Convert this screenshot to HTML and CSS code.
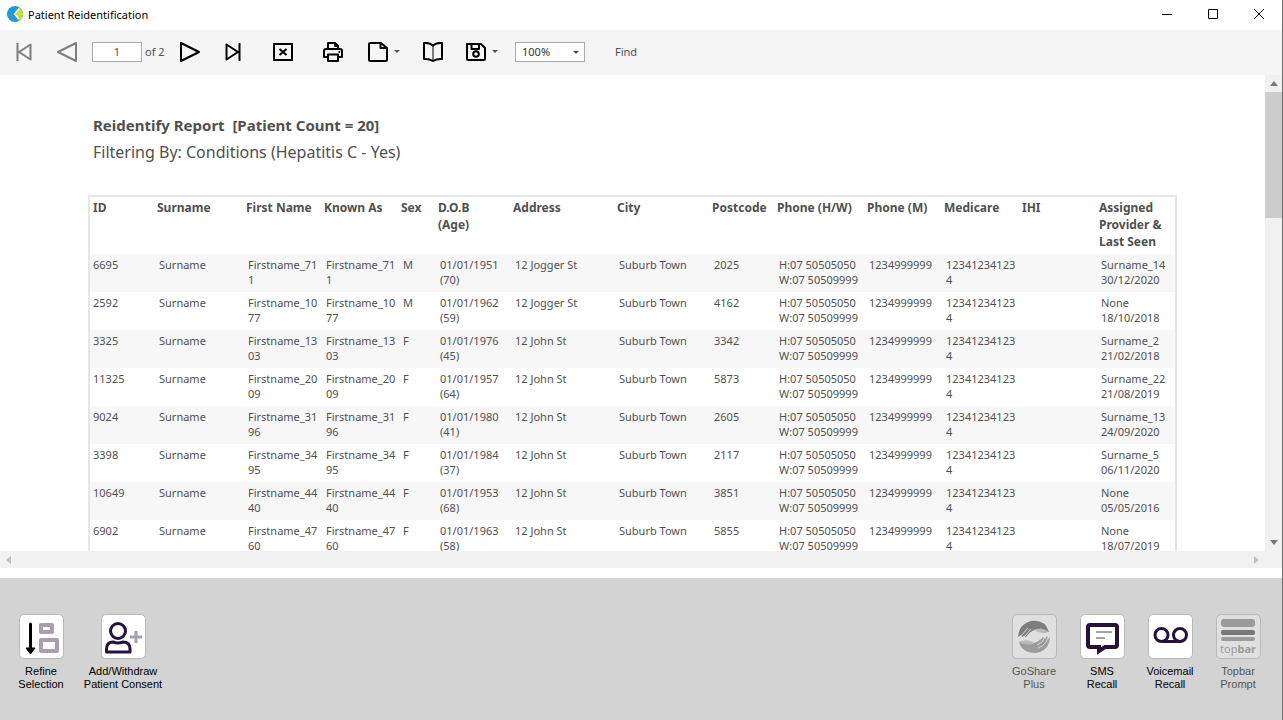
FILE: index.html
```html
<!DOCTYPE html>
<html lang="en">
<head>
    <meta charset="UTF-8">
    <meta name="viewport" content="width=device-width, initial-scale=1.0">
    <title>Patient Reidentification</title>
    <link rel="stylesheet" href="styles.css">
</head>
<body>
    <!-- TITLE BAR -->
    <header class="titlebar">
        <svg class="logo" width="16" height="16" viewBox="0 0 16 16">
            <circle cx="8" cy="8" r="8" fill="#1b9dd9"/>
            <path d="M7 8L12 1A8 8 0 0 1 12 15Z" fill="#cddc39"/>
            <path d="M6.500 8L11.500 2.500L12.500 3.500L8.500 8L12.500 12.500L11.500 13.500Z" fill="#fff"/>
        </svg>
        <h1>Patient Reidentification</h1>
        <div class="window-buttons">
            <button type="button" aria-label="Minimize"><svg width="10" height="10" viewBox="0 0 10 10"><path d="M0 5.5H10"/></svg></button>
            <button type="button" aria-label="Maximize"><svg width="10" height="10" viewBox="0 0 10 10"><path d="M.5 .5H9.5V9.5H.5Z"/></svg></button>
            <button type="button" aria-label="Close"><svg width="10" height="10" viewBox="0 0 10 10"><path d="M0 0L10 10M10 0L0 10"/></svg></button>
        </div>
    </header>

    <!-- TOOLBAR -->
    <div class="toolbar">
        <button type="button" class="tool off close-gap" aria-label="First page"><svg width="20" height="20" viewBox="0 0 20 20"><path d="M3.5 1V19M16.5 2.5V17.5L5 10Z"/></svg></button>
        <button type="button" class="tool off prev" aria-label="Previous page"><svg width="20" height="20" viewBox="0 0 20 20"><path d="M19 1V19L1 10Z"/></svg></button>
        <input class="page" type="text" value="1" aria-label="Page">
        <span class="total">of 2</span>
        <button type="button" class="tool close-gap" aria-label="Next page"><svg width="20" height="20" viewBox="0 0 20 20"><path d="M1 1V19L19 10Z"/></svg></button>
        <button type="button" class="tool" aria-label="Last page"><svg width="20" height="20" viewBox="0 0 20 20"><path d="M16.5 1V19M3.5 2.5V17.5L15 10Z"/></svg></button>
        <button type="button" class="tool" aria-label="Cancel"><svg width="20" height="20" viewBox="0 0 20 20"><path d="M1 2H19V18H1ZM6.5 7L13.5 13M13.5 7L6.5 13"/></svg></button>
        <button type="button" class="tool print" aria-label="Print"><svg width="20" height="20" viewBox="0 0 20 20"><path d="M5 7V1H12L15 4V7M5 15H1V9Q1 7 3 7H17Q19 7 19 9V15H15M5 12.5H15V19H5ZM12 1V4H15"/><path d="M15.5 10H17"/></svg></button>
        <button type="button" class="tool close-gap" aria-label="Page setup"><svg width="20" height="20" viewBox="0 0 20 20"><path d="M1 2Q1 1 2 1H13L19 6V18Q19 19 18 19H2Q1 19 1 18ZM12.5 1V6H19"/></svg><i class="caret"></i></button>
        <button type="button" class="tool close-gap" aria-label="Layout"><svg width="20" height="20" viewBox="0 0 20 20"><path d="M10 3.5Q6 .5 1 1V17Q6 16.5 10 19Q14 16.5 19 17V1Q14 .5 10 3.5Z"/><path class="thin" d="M10 3.5V19"/></svg></button>
        <button type="button" class="tool export" aria-label="Export"><svg width="20" height="20" viewBox="0 0 20 20"><path d="M1 2H15L19 6V17Q19 18 18 18H2Q1 18 1 17ZM5.500 2V7H13V2"/><circle cx="10" cy="12" r="2.800"/></svg><i class="caret"></i></button>
        <div class="zoom">
            <select aria-label="Zoom">
                <option>100%</option>
                <option>150%</option>
                <option>200%</option>
            </select>
            <i class="caret"></i>
        </div>
        <button type="button" class="find">Find</button>
    </div>

    <!-- REPORT -->
    <main class="viewer">
        <div class="report">
            <h2>Reidentify Report&nbsp; [Patient Count = 20]</h2>
            <p>Filtering By: Conditions (Hepatitis C - Yes)</p>
            <table>
                <colgroup>
                    <col class="w-id"><col class="w-surname"><col class="w-name"><col class="w-mid"><col class="w-sex"><col class="w-dob"><col class="w-address"><col class="w-city"><col class="w-postcode"><col class="w-phone"><col class="w-mid"><col class="w-name"><col class="w-mid"><col class="w-provider">
                </colgroup>
                <thead>
                    <tr><th>ID</th><th>Surname</th><th>First Name</th><th>Known As</th><th>Sex</th><th>D.O.B<br>(Age)</th><th>Address</th><th>City</th><th>Postcode</th><th>Phone (H/W)</th><th>Phone (M)</th><th>Medicare</th><th>IHI</th><th>Assigned<br>Provider &amp;<br>Last Seen</th></tr>
                </thead>
                <tbody>
                    <tr><td>6695</td><td>Surname</td><td>Firstname_71<br>1</td><td>Firstname_71<br>1</td><td>M</td><td>01/01/1951<br>(70)</td><td>12 Jogger St</td><td>Suburb Town</td><td>2025</td><td>H:07 50505050<br>W:07 50509999</td><td>1234999999</td><td>12341234123<br>4</td><td></td><td>Surname_14<br>30/12/2020</td></tr>
                    <tr><td>2592</td><td>Surname</td><td>Firstname_10<br>77</td><td>Firstname_10<br>77</td><td>M</td><td>01/01/1962<br>(59)</td><td>12 Jogger St</td><td>Suburb Town</td><td>4162</td><td>H:07 50505050<br>W:07 50509999</td><td>1234999999</td><td>12341234123<br>4</td><td></td><td>None<br>18/10/2018</td></tr>
                    <tr><td>3325</td><td>Surname</td><td>Firstname_13<br>03</td><td>Firstname_13<br>03</td><td>F</td><td>01/01/1976<br>(45)</td><td>12 John St</td><td>Suburb Town</td><td>3342</td><td>H:07 50505050<br>W:07 50509999</td><td>1234999999</td><td>12341234123<br>4</td><td></td><td>Surname_2<br>21/02/2018</td></tr>
                    <tr><td>11325</td><td>Surname</td><td>Firstname_20<br>09</td><td>Firstname_20<br>09</td><td>F</td><td>01/01/1957<br>(64)</td><td>12 John St</td><td>Suburb Town</td><td>5873</td><td>H:07 50505050<br>W:07 50509999</td><td>1234999999</td><td>12341234123<br>4</td><td></td><td>Surname_22<br>21/08/2019</td></tr>
                    <tr><td>9024</td><td>Surname</td><td>Firstname_31<br>96</td><td>Firstname_31<br>96</td><td>F</td><td>01/01/1980<br>(41)</td><td>12 John St</td><td>Suburb Town</td><td>2605</td><td>H:07 50505050<br>W:07 50509999</td><td>1234999999</td><td>12341234123<br>4</td><td></td><td>Surname_13<br>24/09/2020</td></tr>
                    <tr><td>3398</td><td>Surname</td><td>Firstname_34<br>95</td><td>Firstname_34<br>95</td><td>F</td><td>01/01/1984<br>(37)</td><td>12 John St</td><td>Suburb Town</td><td>2117</td><td>H:07 50505050<br>W:07 50509999</td><td>1234999999</td><td>12341234123<br>4</td><td></td><td>Surname_5<br>06/11/2020</td></tr>
                    <tr><td>10649</td><td>Surname</td><td>Firstname_44<br>40</td><td>Firstname_44<br>40</td><td>F</td><td>01/01/1953<br>(68)</td><td>12 John St</td><td>Suburb Town</td><td>3851</td><td>H:07 50505050<br>W:07 50509999</td><td>1234999999</td><td>12341234123<br>4</td><td></td><td>None<br>05/05/2016</td></tr>
                    <tr><td>6902</td><td>Surname</td><td>Firstname_47<br>60</td><td>Firstname_47<br>60</td><td>F</td><td>01/01/1963<br>(58)</td><td>12 John St</td><td>Suburb Town</td><td>5855</td><td>H:07 50505050<br>W:07 50509999</td><td>1234999999</td><td>12341234123<br>4</td><td></td><td>None<br>18/07/2019</td></tr>
                </tbody>
            </table>
        </div>
        <div class="vscroll">
            <button type="button" aria-label="Scroll up"><i class="arrow up"></i></button>
            <div class="thumb"></div>
            <button type="button" aria-label="Scroll down"><i class="arrow down"></i></button>
        </div>
        <div class="hscroll">
            <button type="button" aria-label="Scroll left"><i class="arrow left"></i></button>
            <button type="button" aria-label="Scroll right"><i class="arrow right"></i></button>
        </div>
    </main>

    <!-- ACTIONS -->
    <footer class="actions">
        <button type="button" class="action">
            <span class="tile"><svg width="42" height="42" viewBox="0 0 42 42">
                <path d="M10.500 9V36" stroke="#000" stroke-width="3" stroke-linecap="round"/>
                <path d="M6 33H15L10.500 39Z" fill="#000" stroke="#000" stroke-linejoin="round"/>
                <path d="M21 10H32V17H21ZM21 25H37V36H21Z" fill="none" stroke="#a79fb0" stroke-width="4" stroke-linejoin="round"/>
            </svg></span>
            <span>Refine<br>Selection</span>
        </button>
        <button type="button" class="action">
            <span class="tile"><svg width="42" height="42" viewBox="0 0 42 42" fill="none" stroke="#25123a" stroke-width="3">
                <circle cx="16" cy="16" r="7.500"/>
                <path d="M4.500 37V34Q4.500 27 11 27Q16 29 21 27Q28 27 28 34V37Z" stroke-linejoin="round"/>
                <path d="M28 22H40M34 16V28" stroke="#a79fb0"/>
            </svg></span>
            <span>Add/Withdraw<br>Patient Consent</span>
        </button>
        <div class="spacer"></div>
        <button type="button" class="action" disabled>
            <span class="tile"><svg width="42" height="42" viewBox="0 0 42 42">
                <path d="M5 22Q6 9 18 6Q32 4 36 17Q29 17 24 14Q17 16 13 22L11 21L9 22L8 20Z" fill="#7e7e7e"/>
                <path d="M21 15Q28 11 36 17Q29 20 21 15Z" fill="#b8b8b8"/>
                <path d="M8 21L15 13M11 22L18 14" stroke="#d8d8d8"/>
                <path d="M37 22Q36 36 23 38Q9 38 6 27Q13 26 18 29Q26 27 30 22L32 24L34 21L35 24Z" fill="#9b9b9b"/>
                <path d="M6 27Q13 23 22 28Q15 32 6 27Z" fill="#b8b8b8"/>
                <path d="M35 23Q32 31 25 33M32 22Q30 28 24 30" fill="none" stroke="#d8d8d8"/>
            </svg></span>
            <span>GoShare<br>Plus</span>
        </button>
        <button type="button" class="action">
            <span class="tile"><svg width="42" height="42" viewBox="0 0 42 42" fill="none">
                <path d="M9 10H34Q36 10 36 12V30Q36 32 34 32H24L18 36V32H9Q7 32 7 30V12Q7 10 9 10Z" stroke="#25123a" stroke-width="4"/>
                <path d="M15 17H31M15 23H24" stroke="#a79fb0" stroke-width="2"/>
            </svg></span>
            <span>SMS<br>Recall</span>
        </button>
        <button type="button" class="action">
            <span class="tile"><svg width="42" height="42" viewBox="0 0 42 42" fill="none" stroke="#25123a" stroke-width="3">
                <circle cx="12.500" cy="20" r="6.500"/><circle cx="31" cy="20" r="6.500"/><path d="M12 26.500H31"/>
            </svg></span>
            <span>Voicemail<br>Recall</span>
        </button>
        <button type="button" class="action" disabled>
            <span class="tile topbar"><svg width="36" height="24" viewBox="0 0 36 24">
                <rect x="1" y="0" width="34" height="8" rx="3" fill="#9b9b9b"/>
                <rect x="1" y="11" width="34" height="5" rx="2" fill="#777"/>
                <rect x="1" y="18" width="34" height="4" rx="2" fill="#9b9b9b"/>
            </svg><span class="brand">top<b>bar</b></span></span>
            <span>Topbar<br>Prompt</span>
        </button>
    </footer>
</body>
</html>
```
FILE: styles.css
```css
* {
    box-sizing: border-box;
}

body {
    display: flex;
    flex-direction: column;
    height: 100vh;
    margin: 0;
    border-right: 1px solid #6e6e6e;
    background-color: #fff;
    color: #505050;
    font-family: "Noto Sans", "Open Sans", sans-serif;
    font-size: 11px;
    overflow: hidden;
}

button {
    padding: 0;
    border: none;
    background: none;
    color: inherit;
    font: inherit;
    cursor: pointer;
}

svg {
    display: block;
}

/* title bar */
.titlebar {
    display: flex;
    align-items: center;
    height: 30px;
    padding: 0 0 2px 7px;
    color: #000;
}

.titlebar h1 {
    flex: 1;
    margin: 0 0 0 5px;
    font-size: 11px;
    font-weight: normal;
}

.window-buttons {
    display: flex;
}

.window-buttons button {
    display: flex;
    align-items: center;
    justify-content: center;
    width: 46px;
    height: 28px;
}

.window-buttons svg {
    fill: none;
    stroke: #000;
}

/* toolbar */
.toolbar {
    display: flex;
    align-items: center;
    height: 45px;
    padding: 0 0 2px 14px;
    background-color: #f5f5f5;
}

.tool {
    display: flex;
    align-items: center;
    margin-right: 30px;
}

.tool svg {
    fill: none;
    stroke: #000;
    stroke-width: 2;
    stroke-linejoin: round;
}

.tool .thin {
    stroke-width: 1;
}

.tool.off svg {
    stroke: #7d7d7d;
}

.tool.close-gap {
    margin-right: 23px;
}

.tool.prev {
    margin-right: 15px;
}

.tool.print {
    margin-right: 25px;
}

.tool.export {
    margin-right: 17px;
}

.caret {
    margin-left: 6px;
    border: 3px solid transparent;
    border-top-color: #505050;
    border-bottom: 0;
}

.page {
    width: 50px;
    height: 20px;
    padding: 0;
    border: 1px solid #ababab;
    background-color: #fff;
    color: #505050;
    font: inherit;
    text-align: center;
}

.total {
    width: 38px;
    padding-left: 3px;
}

.zoom {
    position: relative;
    width: 70px;
    height: 20px;
}

.zoom select {
    display: block;
    width: 100%;
    height: 100%;
    padding: 0 6px;
    border: 1px solid #ababab;
    border-radius: 0;
    appearance: none;
    background-color: #fff;
    color: #303030;
    font: inherit;
}

.zoom .caret {
    position: absolute;
    top: 9px;
    right: 6px;
    pointer-events: none;
}

.find {
    margin-left: 30px;
}

/* report viewer */
.viewer {
    display: grid;
    flex: 1;
    grid-template-columns: 1fr 17px;
    grid-template-rows: 1fr 17px;
    min-height: 0;
    margin-bottom: 10px;
}

.report {
    min-width: 0;
    min-height: 0;
    padding: 39px 0 0 88px;
    overflow: hidden;
}

.report h2,
.report p {
    margin: 0 0 5px 5px;
    font-size: 15px;
    line-height: 22px;
}

.report p {
    margin-bottom: 32px;
    font-size: 16px;
}

table {
    width: 1089px;
    border: 2px solid #e6e6e6;
    border-spacing: 0;
    table-layout: fixed;
}

.w-id { width: 64px; }
.w-surname { width: 89px; }
.w-name { width: 78px; }
.w-mid { width: 77px; }
.w-sex { width: 37px; }
.w-dob { width: 75px; }
.w-address { width: 104px; }
.w-city { width: 95px; }
.w-postcode { width: 65px; }
.w-phone { width: 90px; }
.w-provider { width: 79px; }

th,
td {
    text-align: left;
    vertical-align: top;
    white-space: nowrap;
}

th {
    height: 57px;
    padding: 2px 0 0 3px;
    font-size: 12px;
    line-height: 17px;
}

td {
    height: 38px;
    padding: 3px 0 0 5px;
    font-size: 11px;
    line-height: 15px;
}

td:first-child {
    padding-left: 3px;
}

tbody tr:nth-child(odd) {
    background-color: #f7f7f7;
}

/* scrollbars */
.vscroll,
.hscroll {
    display: flex;
    justify-content: space-between;
    background-color: #f1f1f1;
}

.vscroll {
    flex-direction: column;
}

.hscroll {
    grid-column: 1 / 3;
    padding-right: 17px;
}

.vscroll button,
.hscroll button {
    display: flex;
    align-items: center;
    justify-content: center;
    width: 17px;
    height: 17px;
}

.thumb {
    height: 126px;
    margin-bottom: auto;
    background-color: #cdcdcd;
}

.arrow {
    border: 4px solid transparent;
}

.arrow.up {
    border-top: 0;
    border-bottom: 5px solid #777;
}

.arrow.down {
    border-top: 5px solid #777;
    border-bottom: 0;
}

.arrow.left {
    border-right: 5px solid #bfbfbf;
    border-left: 0;
}

.arrow.right {
    border-right: 0;
    border-left: 5px solid #bfbfbf;
}

/* bottom actions */
.actions {
    display: flex;
    height: 142px;
    padding: 36px 10px 0 7px;
    background-color: #d3d3d3;
    font-family: "Liberation Sans", Arial, sans-serif;
    line-height: 13px;
}

.action {
    display: flex;
    flex-direction: column;
    align-items: center;
    align-self: flex-start;
    gap: 6px;
    width: 68px;
    color: #000;
}

.action:nth-child(2) {
    width: 96px;
}

.action:disabled {
    color: #555;
}

.spacer {
    flex: 1;
}

.tile {
    width: 45px;
    height: 45px;
    border: 1px solid #b9b9b9;
    border-radius: 5px;
    background-color: #fff;
}

.action:disabled .tile {
    background-color: #e0e0e0;
}

.topbar {
    display: flex;
    flex-direction: column;
    align-items: center;
    padding-top: 4px;
}

.brand {
    color: #9b9b9b;
    font-family: "Noto Sans", sans-serif;
    font-size: 11px;
    line-height: 11px;
}
```
